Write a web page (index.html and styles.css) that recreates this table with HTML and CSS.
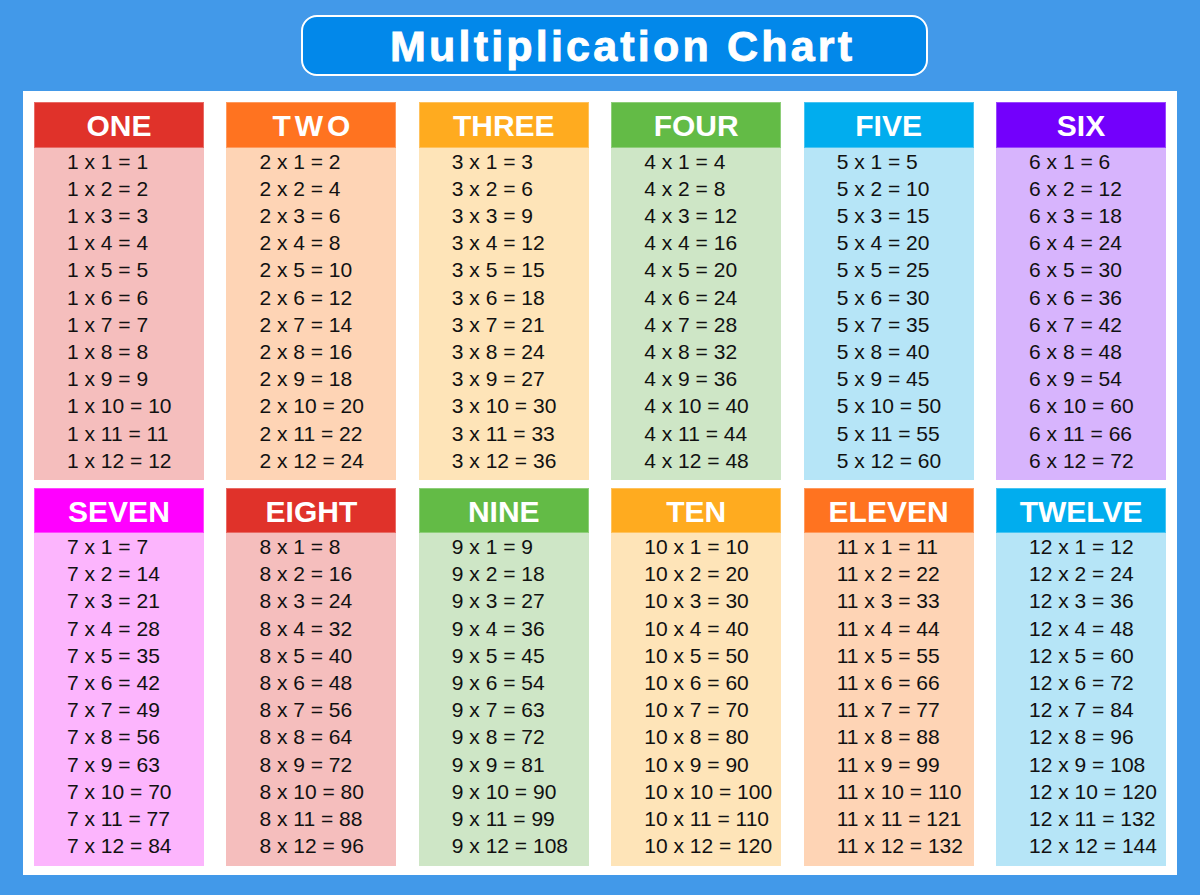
FILE: index.html
```html
<!DOCTYPE html>
<html lang="en">
<head>
<meta charset="utf-8">
<title>Multiplication Chart</title>
<link rel="stylesheet" href="styles.css">
</head>
<body>
<div class="page">
  <div class="title-bar">
    <h1 class="title">Multiplication Chart</h1>
  </div>
  <main class="panel">
    <section class="card red"><h2 class="card-head">ONE</h2><ul class="card-body" data-n="1"></ul></section>
    <section class="card orange"><h2 class="card-head spaced">TWO</h2><ul class="card-body" data-n="2"></ul></section>
    <section class="card yellow"><h2 class="card-head">THREE</h2><ul class="card-body" data-n="3"></ul></section>
    <section class="card green"><h2 class="card-head">FOUR</h2><ul class="card-body" data-n="4"></ul></section>
    <section class="card blue"><h2 class="card-head">FIVE</h2><ul class="card-body" data-n="5"></ul></section>
    <section class="card purple"><h2 class="card-head">SIX</h2><ul class="card-body" data-n="6"></ul></section>
    <section class="card magenta"><h2 class="card-head">SEVEN</h2><ul class="card-body" data-n="7"></ul></section>
    <section class="card red"><h2 class="card-head">EIGHT</h2><ul class="card-body" data-n="8"></ul></section>
    <section class="card green"><h2 class="card-head">NINE</h2><ul class="card-body" data-n="9"></ul></section>
    <section class="card yellow"><h2 class="card-head">TEN</h2><ul class="card-body" data-n="10"></ul></section>
    <section class="card orange"><h2 class="card-head">ELEVEN</h2><ul class="card-body" data-n="11"></ul></section>
    <section class="card blue"><h2 class="card-head">TWELVE</h2><ul class="card-body" data-n="12"></ul></section>
  </main>
</div>
<script src="script.js"></script>
</body>
</html>
```
FILE: styles.css
```css
* { box-sizing: border-box; }
html, body { margin: 0; padding: 0; }
body {
  background: #4299e9;
  font-family: "Liberation Sans", Arial, sans-serif;
  width: 1200px;
  height: 895px;
  overflow: hidden;
}
.page {
  display: flex;
  flex-direction: column;
}
.title-bar {
  display: flex;
  justify-content: center;
  padding: 15px 0 15px 29px;
}
.title {
  margin: 0;
  width: 627px;
  height: 61px;
  background: #0288ea;
  border: 2px solid #ffffff;
  border-radius: 16px;
  color: #ffffff;
  font-size: 43px;
  font-weight: bold;
  letter-spacing: 3.2px;
  line-height: 58px;
  padding-left: 87px;
  white-space: nowrap;
  -webkit-text-stroke: 0.9px #ffffff;
}
.panel {
  margin: 0 23px;
  height: 784px;
  background: #ffffff;
  padding: 11px 11px 9.5px;
  display: grid;
  grid-template-columns: repeat(6, 1fr);
  grid-template-rows: 1fr 1fr;
  column-gap: 22.5px;
  row-gap: 7.5px;
}
.card {
  display: grid;
  grid-template-rows: 45.5px 1fr;
}
.card-head {
  margin: 0;
  color: #ffffff;
  font-size: 30px;
  font-weight: bold;
  text-align: center;
  line-height: 47px;
  box-shadow: inset 0 0 0 1px rgba(255, 255, 255, 0.28);
}
.card-head.spaced { letter-spacing: 4px; padding-left: 4px; }
.card-body {
  list-style: none;
  margin: 0;
  padding: 0 0 0 33px;
  font-size: 21px;
  line-height: 27.2px;
  color: #111111;
  white-space: nowrap;
}
.red .card-head { background: #e0322a; }
.red .card-body { background: #f5bebd; }
.orange .card-head { background: #ff7320; }
.orange .card-body { background: #fed4b5; }
.yellow .card-head { background: #ffab1f; }
.yellow .card-body { background: #fee4b8; }
.green .card-head { background: #63bb46; }
.green .card-body { background: #cee6c6; }
.blue .card-head { background: #01adee; }
.blue .card-body { background: #b6e5f7; }
.purple .card-head { background: #7300fc; }
.purple .card-body { background: #d7b4fd; }
.magenta .card-head { background: #ff00ff; }
.magenta .card-body { background: #fcb5fd; }
```
FILE: script.js
```js
document.querySelectorAll('.card-body').forEach(function (ul) {
  var n = parseInt(ul.getAttribute('data-n'), 10);
  for (var i = 1; i <= 12; i++) {
    var li = document.createElement('li');
    li.textContent = n + ' x ' + i + ' = ' + (n * i);
    ul.appendChild(li);
  }
});
```
